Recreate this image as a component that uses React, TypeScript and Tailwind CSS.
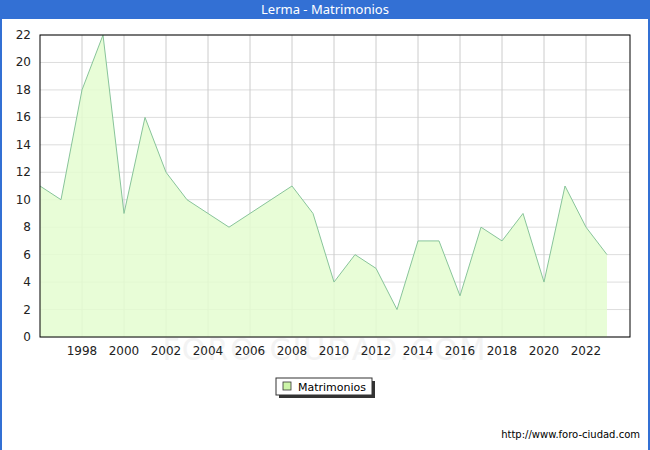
const data = [11, 10, 18, 22, 9, 16, 12, 10, 9, 8, 9, 10, 11, 9, 4, 6, 5, 2, 7, 7, 3, 8, 7, 9, 4, 11, 8, 6];

const X0 = 40, Y0 = 337, PX = 21, PY = 302 / 22;
const px = (i: number) => X0 + i * PX;
const py = (v: number) => Y0 - v * PY;

function Chart() {
  const pts = data.map((v, i) => `${px(i)},${py(v)}`).join(" ");
  const area = `${px(0)},${Y0} ${pts} ${px(data.length - 1)},${Y0}`;
  const yTicks = [0, 2, 4, 6, 8, 10, 12, 14, 16, 18, 20, 22];
  const xTicks = [1998, 2000, 2002, 2004, 2006, 2008, 2010, 2012, 2014, 2016, 2018, 2020, 2022];
  return (
    <svg width="646" height="431" viewBox="2 19 646 431" className="block">
      <text x="325" y="360" textAnchor="middle" fontSize="30" fill="#f3f3f3" fontFamily="DejaVu Sans, sans-serif" letterSpacing="2">FORO-CIUDAD.COM</text>
      {yTicks.map((t) => (
        <line key={t} x1={X0} x2={630} y1={py(t)} y2={py(t)} stroke="#dddddd" />
      ))}
      {xTicks.map((y) => (
        <line key={y} x1={px(y - 1996)} x2={px(y - 1996)} y1={35} y2={Y0} stroke="#cccccc" />
      ))}
      <polygon points={area} fill="#e4fdd0" fillOpacity="0.85" />
      <polyline points={pts} fill="none" stroke="#88c49a" strokeWidth="1" />
      <rect x={X0} y={35} width={590} height={302} fill="none" stroke="#000" />
      {yTicks.map((t) => (
        <text key={t} x={31} y={py(t) + 4} textAnchor="end" fontSize="12" fontFamily="DejaVu Sans, sans-serif" fill="#222">{t}</text>
      ))}
      {xTicks.map((y) => (
        <text key={y} x={px(y - 1996)} y={355} textAnchor="middle" fontSize="12" fontFamily="DejaVu Sans, sans-serif" fill="#222">{y}</text>
      ))}
      <rect x={279} y={381} width={96} height={17} fill="#333" />
      <rect x={276} y={378} width={96} height={17} fill="#fff" stroke="#333" />
      <rect x={283} y={382} width={8} height={8} fill="#ccf5a8" stroke="#333" strokeWidth="0.8" />
      <text x={298} y={391} fontSize="11" fontFamily="DejaVu Sans, sans-serif" fill="#000">Matrimonios</text>
      <text x={640} y={438} textAnchor="end" fontSize="10" fontFamily="DejaVu Sans, sans-serif" fill="#000">http://www.foro-ciudad.com</text>
    </svg>
  );
}

export default function App() {
  return (
    <div className="w-[650px] h-[450px] flex flex-col bg-[#3370d4] overflow-hidden">
      <div className="h-[19px] flex items-center justify-center text-white text-[13px] font-['DejaVu_Sans',sans-serif]">
        Lerma - Matrimonios
      </div>
      <div className="flex-1 mx-[2px] mb-[1px] bg-white">
        <Chart />
      </div>
    </div>
  );
}
